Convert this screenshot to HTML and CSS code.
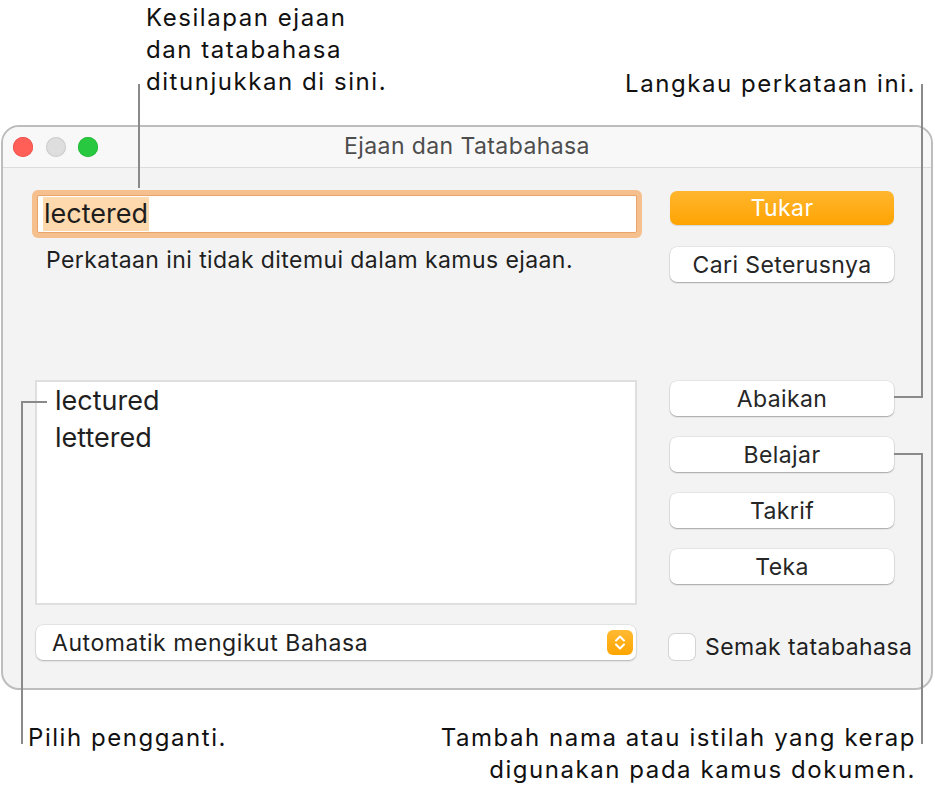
FILE: index.html
```html
<!DOCTYPE html>
<html lang="ms">
<head>
<meta charset="utf-8">
<title>Ejaan dan Tatabahasa</title>
<link rel="stylesheet" href="styles.css">
</head>
<body>
<div class="page">
  <header class="top-notes">
    <p class="note note-left">Kesilapan ejaan<br>dan tatabahasa<br>ditunjukkan di sini.</p>
    <p class="note note-right">Langkau perkataan ini.</p>
  </header>

  <section class="window">
    <div class="titlebar">
      <div class="lights">
        <span class="light red"></span>
        <span class="light gray"></span>
        <span class="light green"></span>
      </div>
      <div class="title">Ejaan dan Tatabahasa</div>
      <div class="spacer"></div>
    </div>
    <div class="content">
      <div class="col-left">
        <div class="field"><span class="sel">lectered</span></div>
        <p class="msg">Perkataan ini tidak ditemui dalam kamus ejaan.</p>
        <ul class="list">
          <li>lectured</li>
          <li>lettered</li>
        </ul>
        <div class="popup">
          <span class="popup-label">Automatik mengikut Bahasa</span>
          <span class="stepper">
            <svg width="26" height="25" viewBox="0 0 26 25">
              <path d="M9 10.5 L13 6.5 L17 10.5" fill="none" stroke="#fff" stroke-width="2" stroke-linecap="round" stroke-linejoin="round"/>
              <path d="M9 14.5 L13 18.5 L17 14.5" fill="none" stroke="#fff" stroke-width="2" stroke-linecap="round" stroke-linejoin="round"/>
            </svg>
          </span>
        </div>
      </div>
      <div class="col-right">
        <button class="btn primary">Tukar</button>
        <button class="btn btn-find">Cari Seterusnya</button>
        <button class="btn btn-ignore">Abaikan</button>
        <button class="btn">Belajar</button>
        <button class="btn">Takrif</button>
        <button class="btn">Teka</button>
        <label class="check"><span class="box"></span><span>Semak tatabahasa</span></label>
      </div>
    </div>
  </section>

  <footer class="bottom-notes">
    <p class="note">Pilih pengganti.</p>
    <p class="note note-end">Tambah nama atau istilah yang kerap<br>digunakan pada kamus dokumen.</p>
  </footer>

  <span class="line line-top"></span>
  <span class="line line-skip-v"></span>
  <span class="line line-skip-h"></span>
  <span class="line line-learn-h"></span>
  <span class="line line-learn-v"></span>
  <span class="line line-pick-h"></span>
  <span class="line line-pick-v"></span>
</div>
</body>
</html>
```

FILE: styles.css
```css
* { box-sizing: border-box; }

html, body {
  margin: 0;
  padding: 0;
  background: #ffffff;
}

body {
  font-family: "Inter", "Roboto", "Liberation Sans", sans-serif;
  color: #1d1d1d;
}

.page {
  position: relative;
  width: 935px;
  height: 796px;
  overflow: hidden;
}

p { margin: 0; }

.note {
  font-size: 24px;
  line-height: 32px;
  color: #111;
  letter-spacing: 1.55px;
  white-space: nowrap;
}

/* top annotations */
.top-notes {
  height: 125px;
  display: flex;
  justify-content: space-between;
  align-items: flex-start;
}
.note-left {
  margin-left: 146px;
  margin-top: 2px;
}
.note-right {
  margin-top: 68px;
  margin-right: 19px;
}

/* window */
.window {
  margin-left: 1px;
  width: 932px;
  height: 565px;
  border: 2px solid #bdbdbd;
  border-radius: 18px;
  background: #f3f3f3;
  overflow: hidden;
  display: flex;
  flex-direction: column;
}

.titlebar {
  height: 41px;
  flex: none;
  background: #f8f8f8;
  border-bottom: 1px solid #dcdcdc;
  display: grid;
  grid-template-columns: 1fr auto 1fr;
  align-items: center;
}

.lights {
  display: flex;
  gap: 12.5px;
  padding-left: 10px;
}
.light {
  width: 20px;
  height: 20px;
  border-radius: 50%;
  display: block;
}
.light.red { background: #ff5f57; box-shadow: inset 0 0 0 0.5px #e0443e; }
.light.gray { background: #dedede; box-shadow: inset 0 0 0 1px #cdcdcd; }
.light.green { background: #28c840; box-shadow: inset 0 0 0 0.5px #1aab29; }

.title {
  font-size: 23px;
  letter-spacing: 0.4px;
  color: #4d4d4d;
  margin-top: -2px;
}

.content {
  flex: 1;
  display: flex;
  gap: 33px;
  padding: 0 37px 0 32px;
}

.col-left {
  width: 602px;
  display: flex;
  flex-direction: column;
}

.field {
  margin: 27px 0 0 2px;
  width: 600px;
  height: 38px;
  background: #fff;
  border: 1px solid #eaa46a;
  box-shadow: 0 0 0 5px #f6c08e;
  border-radius: 2px;
  padding: 0 0 0 5px;
  display: flex;
  align-items: center;
}
.sel {
  background: #fdd9ad;
  font-size: 27px;
  line-height: 34px;
  padding: 0 1px;
  color: #1d1d1d;
}

.msg {
  margin: 14px 0 0 11px;
  font-size: 23px;
  letter-spacing: 0.42px;
  line-height: 26px;
  color: #1f1f1f;
  white-space: nowrap;
}

.list {
  list-style: none;
  margin: 107px 0 0 0;
  padding: 0 0 0 18px;
  height: 225px;
  background: #fff;
  border: 2px solid #dfdfdf;
}
.list li {
  font-size: 27px;
  line-height: 37px;
  color: #1f1f1f;
}

.popup {
  margin: 20px 1px 0 1px;
  height: 35px;
  background: #fff;
  border-radius: 7px;
  box-shadow: 0 1px 2px rgba(0,0,0,0.22), 0 0 0 0.5px rgba(0,0,0,0.10);
  display: flex;
  align-items: center;
  justify-content: space-between;
  padding: 0 3px 0 16px;
}
.popup-label {
  font-size: 23px;
  letter-spacing: 0.55px;
  color: #1f1f1f;
}
.stepper {
  width: 26px;
  height: 25px;
  border-radius: 6px;
  background: linear-gradient(#ffba33, #ffa500);
  display: block;
}
.stepper svg { display: block; }

.col-right {
  width: 224px;
  display: flex;
  flex-direction: column;
  gap: 21px;
}

.btn {
  display: block;
  width: 224px;
  height: 35px;
  border: none;
  border-radius: 7px;
  background: #fff;
  box-shadow: 0 1px 1.5px rgba(0,0,0,0.28), 0 0 0 0.5px rgba(0,0,0,0.10);
  font-family: inherit;
  font-size: 23px;
  letter-spacing: 0.4px;
  color: #262626;
  padding: 0;
  text-align: center;
}
.btn.primary {
  margin-top: 23px;
  height: 34px;
  color: #fff;
  background: linear-gradient(#ffb62f, #ffa402);
  box-shadow: 0 1px 1px rgba(0,0,0,0.12);
}
.btn-find { margin-top: 1px; }
.btn-ignore { margin-top: 78px; }

.check {
  margin-top: 28px;
  margin-left: -1px;
  display: flex;
  align-items: center;
  gap: 10px;
  font-size: 23px;
  letter-spacing: 0.45px;
  color: #1f1f1f;
  white-space: nowrap;
}
.box {
  width: 26px;
  height: 26px;
  border-radius: 6px;
  background: #fff;
  box-shadow: 0 0 0 1px #d4d4d4, 0 1px 1px rgba(0,0,0,0.06);
  display: block;
  flex: none;
}

/* bottom annotations */
.bottom-notes {
  margin-top: 32px;
  display: flex;
  justify-content: space-between;
  padding: 0 19px 0 28px;
}
.note-end { text-align: right; }

/* callout lines */
.line {
  position: absolute;
  background: #8a8a8a;
  display: block;
}
.line-top { left: 138px; top: 84px; width: 2px; height: 104px; }
.line-skip-v { left: 921px; top: 84px; width: 2px; height: 314px; }
.line-skip-h { left: 894px; top: 396px; width: 29px; height: 2px; }
.line-learn-h { left: 894px; top: 453px; width: 29px; height: 2px; }
.line-learn-v { left: 921px; top: 453px; width: 2px; height: 291px; }
.line-pick-h { left: 21px; top: 401px; width: 26px; height: 2px; }
.line-pick-v { left: 21px; top: 401px; width: 2px; height: 343px; }
```
